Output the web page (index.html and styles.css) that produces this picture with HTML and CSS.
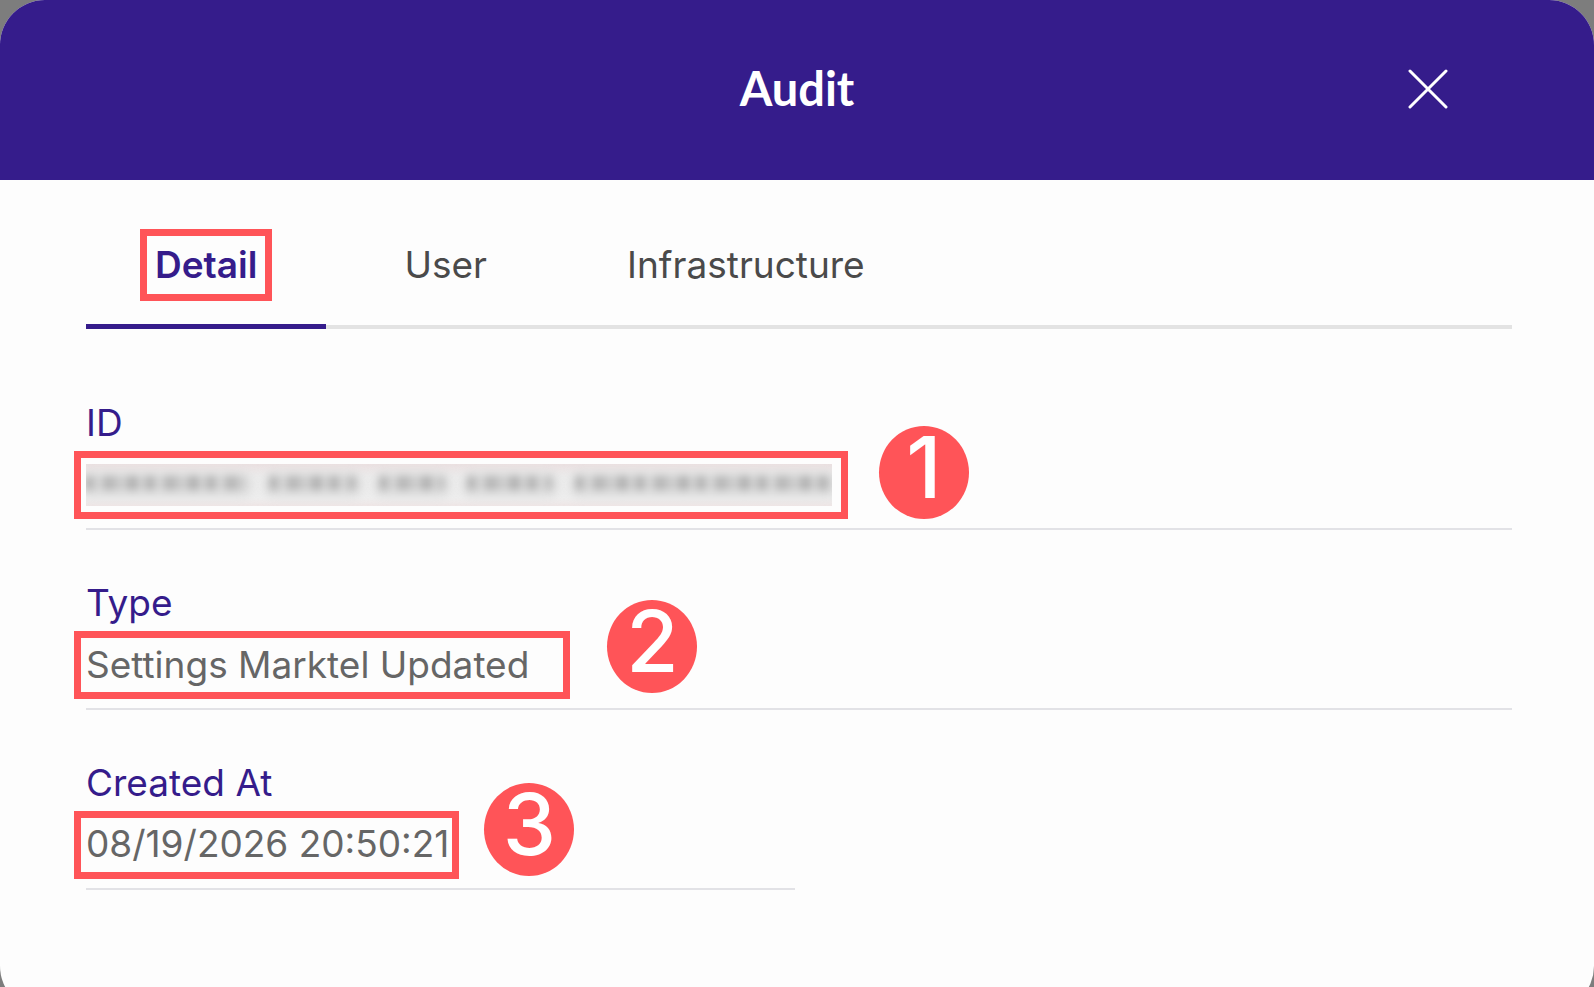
FILE: index.html
```html
<!DOCTYPE html>
<html lang="en">
<head>
    <meta charset="UTF-8">
    <meta name="viewport" content="width=device-width, initial-scale=1.0">
    <title>Audit</title>
    <link rel="stylesheet" href="styles.css">
</head>
<body>

    <div class="dialog" role="dialog" aria-labelledby="dialog-title">
        <!-- Header -->
        <header class="dialog-header">
            <h1 id="dialog-title">Audit</h1>
            <button class="close-btn" type="button" aria-label="Close">
                <svg viewBox="0 0 40 40" width="40" height="40">
                    <path d="M2 2L38 38M38 2L2 38" fill="none" stroke="#fff" stroke-width="3" stroke-linecap="round"/>
                </svg>
            </button>
        </header>

        <div class="dialog-body">
            <!-- Tabs -->
            <nav class="tabs" role="tablist">
                <button class="tab active" type="button" role="tab" aria-selected="true"><span class="tab-mark">Detail</span></button>
                <button class="tab" type="button" role="tab" aria-selected="false">User</button>
                <button class="tab" type="button" role="tab" aria-selected="false">Infrastructure</button>
            </nav>

            <!-- Details -->
            <dl class="fields">
                <div class="field wide">
                    <dt>ID</dt>
                    <dd class="mark mark-id">
                        <div class="redacted">
                            <i class="word w1"></i>
                            <i class="word w2"></i>
                            <i class="word w3"></i>
                            <i class="word w4"></i>
                            <i class="word w5"></i>
                        </div>
                        <span class="badge badge-1">1</span>
                    </dd>
                </div>
                <div class="field wide">
                    <dt>Type</dt>
                    <dd class="mark mark-type">Settings Marktel Updated<span class="badge badge-2">2</span></dd>
                </div>
                <div class="field">
                    <dt>Created At</dt>
                    <dd class="mark">08/19/2026 20:50:21<span class="badge badge-3">3</span></dd>
                </div>
            </dl>
        </div>
    </div>

</body>
</html>
```

FILE: styles.css
```css
* {
    box-sizing: border-box;
}
body {
    font-family: Inter, sans-serif;
    font-size: 37px;
    margin: 0;
    background-color: #7d7d7d;
    height: 100vh;
    overflow: hidden;
}
.dialog {
    min-height: calc(100vh + 24px);
    background: #fdfdfd;
    border-radius: 45px;
    overflow: hidden;
}
.dialog-header {
    position: relative;
    display: flex;
    align-items: center;
    justify-content: center;
    height: 180px;
    padding-bottom: 4px;
    background: #351c8b;
    color: #fff;
}
h1 {
    margin: 0;
    font-family: Lato, sans-serif;
    font-size: 47px;
    font-weight: 700;
    line-height: 60px;
}
.close-btn {
    position: absolute;
    top: 69px;
    right: 146px;
    display: flex;
    padding: 0;
    border: none;
    background: none;
    cursor: pointer;
}
.dialog-body {
    padding: 0 82px 0 86px;
}

/* Tabs */
.tabs {
    display: flex;
    align-items: flex-end;
    height: 149px;
    box-shadow: inset 0 -4px #e3e3e3;
}
.tab {
    padding: 0 70px 23px;
    border: none;
    border-bottom: 5px solid transparent;
    background: none;
    color: #4a4a4a;
    font: inherit;
    line-height: 72px;
    cursor: pointer;
}
.tab.active {
    margin-right: 8px;
    padding: 0 54px 23px;
    border-bottom-color: #351c8b;
    color: #351c8b;
    font-weight: 600;
}
.tab-mark {
    display: block;
    padding: 0 8px;
    border: 7px solid #ff5458;
    line-height: 58px;
}

/* Details */
.fields {
    display: grid;
    grid-template-columns: 1fr 1fr;
    column-gap: 8px;
    margin: 0;
    padding-top: 21px;
}
.field {
    padding: 51px 0 9px;
    border-bottom: 2px solid #e2e2e6;
}
.wide {
    grid-column: span 2;
}
dt {
    margin-bottom: 6px;
    color: #351c8b;
    line-height: 44px;
}
dd {
    margin: 0;
    color: #666;
    line-height: 52px;
}
.mark {
    position: relative;
    width: fit-content;
    height: 68px;
    margin-left: -12px;
    padding: 0 3px 0 5px;
    border: 7px solid #ff5458;
}
.mark-id {
    padding: 6px 9px 6px 5px;
}
.mark-type {
    padding-right: 34px;
    line-height: 54px;
}

/* Numbered badges */
.badge {
    position: absolute;
    left: 100%;
    width: 90px;
    height: 93px;
    border-radius: 50%;
    background: #ff5458;
    color: #fff;
    font-size: 85px;
    font-weight: 500;
    line-height: 83px;
    text-align: center;
}
.badge-1 {
    top: -32px;
    margin-left: 38px;
}
.badge-2 {
    top: -38px;
    margin-left: 44px;
}
.badge-3 {
    top: -35px;
    margin-left: 32px;
}

/* Blurred out value */
.redacted {
    display: flex;
    gap: 24px;
    width: 746px;
    height: 42px;
    padding-top: 12px;
    overflow: hidden;
    background: linear-gradient(#ebe0e1, #eeeeee 30%, #f0f0f0 80%, #efe6e6);
}
.word {
    height: 14px;
    background: repeating-linear-gradient(90deg, #a8a8a8 0 7px, #d8d8d8 7px 17px, #b4b4b4 17px 29px, #cccccc 29px 43px, #a4a4a4 43px 50px, #d0d0d0 50px 61px);
    box-shadow: 0 2px 8px 5px #dcdcdc;
    filter: blur(4px);
}
.w1 {
    width: 160px;
}
.w2 {
    width: 86px;
}
.w3 {
    width: 64px;
}
.w4 {
    width: 84px;
}
.w5 {
    width: 256px;
}
```
